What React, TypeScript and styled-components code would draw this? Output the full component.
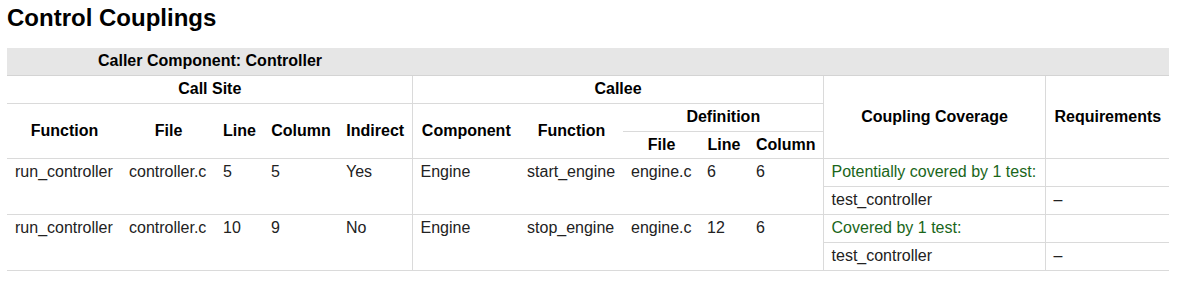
import styled, { createGlobalStyle } from "styled-components"

const GlobalStyle = createGlobalStyle`
  body {
    margin: 0;
    background: #ffffff;
    font-family: "Liberation Sans", Arial, sans-serif;
    color: #222222;
  }
`

const Page = styled.div`
  padding: 4px 7px 0 7px;
`

const Title = styled.h2`
  margin: 0 0 16px 0;
  font-size: 24px;
  font-weight: bold;
  color: #000000;
  line-height: normal;
`

const Table = styled.table`
  width: 1162px;
  border-collapse: collapse;
  table-layout: fixed;
  font-size: 16px;
  line-height: 18.85px;
`

const BandRow = styled.tr`
  background: #e6e6e6;
`

const Head = styled.th<{ $divider?: boolean }>`
  padding: 4px 7px 4px 8px;
  font-weight: bold;
  color: #000000;
  text-align: center;
  vertical-align: middle;
  border-bottom: 1px solid #dadada;
  border-left: ${({ $divider }) => ($divider ? "1px solid #dadada" : "none")};
`

const Band = styled.th`
  padding: 4px 7px 4px 8px;
  font-weight: bold;
  color: #000000;
  text-align: center;
  border-bottom: 1px solid #d4d4d4;
`

const Cell = styled.td<{ $divider?: boolean; $tone?: "ok" | "plain" }>`
  padding: 4px 7px 4px 8px;
  vertical-align: top;
  text-align: left;
  white-space: nowrap;
  border-bottom: 1px solid #dadada;
  border-left: ${({ $divider }) => ($divider ? "1px solid #dadada" : "none")};
  color: ${({ $tone }) => ($tone === "ok" ? "#1a661a" : "#222222")};
`

const widths = [114, 94, 48, 75, 74, 107, 104, 76, 49, 75, 222, 124]

interface Coupling {
  fn: string
  file: string
  line: number
  column: number
  indirect: string
  component: string
  callee: string
  defFile: string
  defLine: number
  defColumn: number
  coverage: string
  test: string
  requirement: string
}

const couplings: Coupling[] = [
  {
    fn: "run_controller",
    file: "controller.c",
    line: 5,
    column: 5,
    indirect: "Yes",
    component: "Engine",
    callee: "start_engine",
    defFile: "engine.c",
    defLine: 6,
    defColumn: 6,
    coverage: "Potentially covered by 1 test:",
    test: "test_controller",
    requirement: "–",
  },
  {
    fn: "run_controller",
    file: "controller.c",
    line: 10,
    column: 9,
    indirect: "No",
    component: "Engine",
    callee: "stop_engine",
    defFile: "engine.c",
    defLine: 12,
    defColumn: 6,
    coverage: "Covered by 1 test:",
    test: "test_controller",
    requirement: "–",
  },
]

const CouplingRows = ({ c }: { c: Coupling }) => (
  <>
    <tr>
      <Cell rowSpan={2}>{c.fn}</Cell>
      <Cell rowSpan={2}>{c.file}</Cell>
      <Cell rowSpan={2}>{c.line}</Cell>
      <Cell rowSpan={2}>{c.column}</Cell>
      <Cell rowSpan={2}>{c.indirect}</Cell>
      <Cell rowSpan={2} $divider>{c.component}</Cell>
      <Cell rowSpan={2}>{c.callee}</Cell>
      <Cell rowSpan={2}>{c.defFile}</Cell>
      <Cell rowSpan={2}>{c.defLine}</Cell>
      <Cell rowSpan={2}>{c.defColumn}</Cell>
      <Cell $divider $tone="ok">{c.coverage}</Cell>
      <Cell $divider></Cell>
    </tr>
    <tr>
      <Cell $divider>{c.test}</Cell>
      <Cell $divider>{c.requirement}</Cell>
    </tr>
  </>
)

const App = () => {
  return (
    <Page>
      <GlobalStyle />
      <Title>Control Couplings</Title>
      <Table>
        <colgroup>
          {widths.map((w, i) => (
            <col key={i} style={{ width: w }} />
          ))}
        </colgroup>
        <thead>
          <BandRow>
            <Band colSpan={5}>Caller Component: Controller</Band>
            <Band colSpan={7}></Band>
          </BandRow>
          <tr>
            <Head colSpan={5}>Call Site</Head>
            <Head colSpan={5} $divider>Callee</Head>
            <Head rowSpan={3} $divider>Coupling Coverage</Head>
            <Head rowSpan={3} $divider>Requirements</Head>
          </tr>
          <tr>
            <Head rowSpan={2}>Function</Head>
            <Head rowSpan={2}>File</Head>
            <Head rowSpan={2}>Line</Head>
            <Head rowSpan={2}>Column</Head>
            <Head rowSpan={2}>Indirect</Head>
            <Head rowSpan={2} $divider>Component</Head>
            <Head rowSpan={2}>Function</Head>
            <Head colSpan={3}>Definition</Head>
          </tr>
          <tr>
            <Head>File</Head>
            <Head>Line</Head>
            <Head>Column</Head>
          </tr>
        </thead>
        <tbody>
          {couplings.map((c, i) => (
            <CouplingRows key={i} c={c} />
          ))}
        </tbody>
      </Table>
    </Page>
  )
}

export default App
